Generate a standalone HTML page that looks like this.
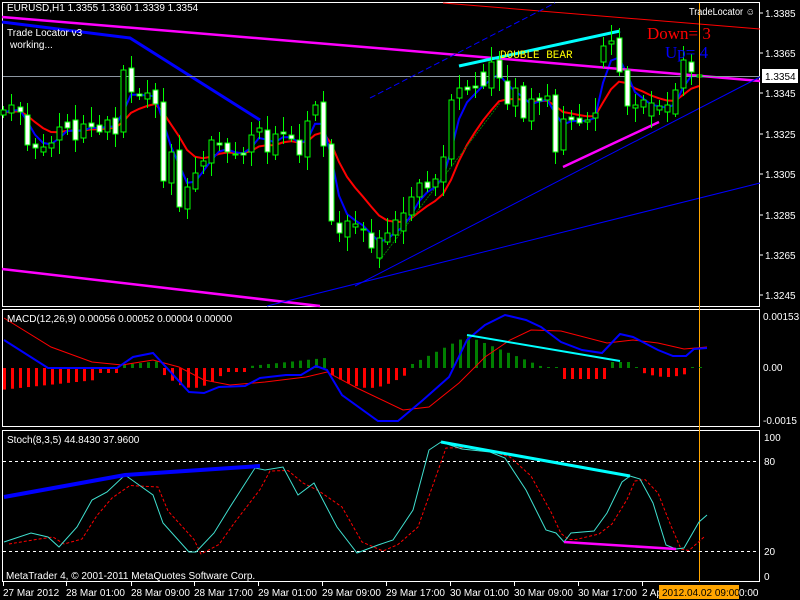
<!DOCTYPE html>
<html><head><meta charset="utf-8"><style>
html,body{margin:0;padding:0;background:#000;width:800px;height:600px;overflow:hidden}
svg{display:block}
text{font-family:"Liberation Sans",sans-serif;font-size:10px;fill:#fff}
</style></head><body>
<svg id="s" width="800" height="600" viewBox="0 0 800 600" xmlns="http://www.w3.org/2000/svg">
<rect width="800" height="600" fill="#000"/>
<g id="main"></g>
<rect x="2.5" y="2.5" width="757" height="304" fill="none" stroke="#fff"/>
<rect x="2.5" y="309.5" width="757" height="117" fill="none" stroke="#fff"/>
<rect x="2.5" y="430.5" width="757" height="151" fill="none" stroke="#fff"/>
<polyline points="2,17 400,50 760,81" fill="none" stroke="#ff00ff" stroke-width="2.5"/>
<polyline points="2,22 130,38 260,120" fill="none" stroke="#0000ff" stroke-width="3"/>
<line x1="2" y1="269" x2="320" y2="306" stroke="#ff00ff" stroke-width="2.5"/>
<line x1="3" y1="76.5" x2="760" y2="76.5" stroke="#8c96a0" stroke-width="1"/>
<line x1="443" y1="3" x2="760" y2="29" stroke="#ff0000" stroke-width="1"/>
<line x1="370" y1="98" x2="555" y2="3" stroke="#0000ff" stroke-width="1" stroke-dasharray="6,3"/>
<line x1="355" y1="286" x2="760" y2="77" stroke="#0000ff" stroke-width="1"/>
<line x1="267" y1="306" x2="760" y2="183" stroke="#0000ff" stroke-width="1"/>
<line x1="380" y1="260" x2="500" y2="103" stroke="#008000" stroke-width="1" stroke-dasharray="2,1"/>
<line x1="459" y1="66" x2="620" y2="31" stroke="#00ffff" stroke-width="3"/>
<line x1="563" y1="167" x2="659" y2="122" stroke="#ff00ff" stroke-width="2.5"/>
<g id="candles"></g>
<line x1="699.5" y1="3" x2="699.5" y2="582" stroke="#ffa500" stroke-width="1"/>
<text x="7" y="11">EURUSD,H1  1.3355 1.3360 1.3339 1.3354</text>
<text x="7" y="36">Trade Locator v3</text>
<text x="10" y="48">working...</text>
<text x="500" y="58" style="font-family:'Liberation Mono',monospace;font-size:11px;fill:#ffff00">DOUBLE BEAR</text>
<text x="647" y="39" style="font-family:'Liberation Serif',serif;font-size:17px;fill:#ff0000">Down=  3</text>
<text x="665" y="58" style="font-family:'Liberation Serif',serif;font-size:17px;fill:#0000ff">Up=  4</text>
<text x="689" y="15" textLength="66" lengthAdjust="spacingAndGlyphs">TradeLocator ☺</text>
<g id="axis"></g>
<rect x="762" y="69" width="36" height="14" fill="#fff"/>
<text x="765" y="80" style="fill:#000">1.3354</text>
<g id="hist"></g>
<polyline id="macdRed" fill="none" stroke="#ff0000" stroke-width="1"/>
<polyline id="macdBlue" fill="none" stroke="#0000ff" stroke-width="2"/>
<line x1="467" y1="335" x2="620" y2="361" stroke="#00ffff" stroke-width="2"/>
<text x="7" y="322">MACD(12,26,9) 0.00056 0.00052 0.00004 0.00000</text>
<text x="763" y="320">0.00153</text>
<text x="763" y="371">0.00</text>
<text x="763" y="424">-0.0015</text>
<line x1="3" y1="461.5" x2="760" y2="461.5" stroke="#fff" stroke-dasharray="3,3"/>
<line x1="3" y1="551.5" x2="760" y2="551.5" stroke="#fff" stroke-dasharray="3,3"/>
<polyline id="stSig" fill="none" stroke="#ff0000" stroke-width="1" stroke-dasharray="3,2"/>
<polyline id="stMain" fill="none" stroke="#40e0d0" stroke-width="1"/>
<polyline points="4,497 125,475 260,466" fill="none" stroke="#0000ff" stroke-width="4"/>
<line x1="441" y1="442" x2="630" y2="476" stroke="#00ffff" stroke-width="3"/>
<line x1="564" y1="542" x2="676" y2="549" stroke="#ff00ff" stroke-width="2.5"/>
<text x="7" y="443">Stoch(8,3,5) 44.8430 37.9600</text>
<text x="764" y="441">100</text>
<text x="764" y="465">80</text>
<text x="764" y="555">20</text>
<text x="764" y="580">0</text>
<text x="6" y="579">MetaTrader 4, © 2001-2011 MetaQuotes Software Corp.</text>
<g id="time"></g>
<rect x="659" y="585" width="80" height="14" fill="#ffa500"/>
<text x="662" y="596" style="fill:#000">2012.04.02 09:00</text>
<text x="739" y="596">0:00</text>
</svg>
<script>
var NS="http://www.w3.org/2000/svg";
function el(p,t,a){var e=document.createElementNS(NS,t);for(var k in a)e.setAttribute(k,a[k]);p.appendChild(e);return e;}
var C=[[3,110,115,0],[11,105,113,0],[20,107,112,1],[27,115,145,1],[35,144,148,1],[43,147,152,0],[51,143,148,0],[59,127,140,0],[67,122,128,1],[75,120,140,1],[83,124,138,0],[91,123,127,1],[99,125,132,1],[107,120,132,0],[115,118,134,1],[123,70,132,0],[131,68,92,1],[139,94,96,1],[147,93,99,0],[155,90,104,1],[163,102,181,1],[171,152,183,0],[179,150,207,1],[187,187,209,0],[195,173,189,0],[203,161,166,0],[211,140,163,0],[219,143,145,1],[227,143,152,1],[235,154,155,1],[243,153,155,1],[251,135,152,0],[259,128,132,0],[267,130,152,1],[275,134,155,0],[283,132,134,1],[291,135,139,1],[299,140,155,1],[307,121,157,0],[315,105,115,0],[323,102,146,1],[331,144,221,1],[339,223,233,1],[347,221,237,0],[355,224,227,0],[363,229,230,1],[371,233,248,1],[379,238,258,0],[387,233,242,0],[395,220,235,0],[403,213,231,0],[411,197,215,0],[419,183,197,0],[427,182,188,1],[435,179,187,0],[443,157,182,0],[451,100,159,0],[459,88,98,0],[467,87,90,1],[475,86,88,1],[483,72,86,1],[491,62,88,0],[499,60,78,1],[507,81,104,1],[515,88,106,0],[523,86,118,1],[531,99,121,0],[539,98,101,1],[547,96,100,0],[555,95,152,1],[563,119,150,0],[571,117,120,1],[579,118,123,1],[587,120,122,0],[595,113,118,0],[603,46,62,0],[611,41,44,0],[619,38,72,1],[627,70,106,1],[635,105,108,0],[643,100,107,0],[651,103,116,0],[659,106,110,0],[667,105,112,0],[675,90,114,0],[683,60,88,0],[691,62,72,1],[699,75,77,0]];
var g=document.getElementById('main'),cg=document.getElementById('candles');
var b=[],r=[],eb=null,er=null;
C.forEach(function(c,i){var m=(c[1]+c[2])/2;eb=eb==null?m:eb+0.55*(m-eb);er=er==null?m:er+0.22*(m-er);b.push(c[0]+','+eb.toFixed(1));r.push(c[0]+','+er.toFixed(1));});
el(g,'polyline',{points:r.join(' '),fill:'none',stroke:'#ff0000','stroke-width':2});
el(g,'polyline',{points:b.join(' '),fill:'none',stroke:'#0000ff','stroke-width':2});
C.forEach(function(c,i){var hi=c[1]-(4+(i*7)%13),lo=c[2]+(3+(i*5)%12);
el(cg,'line',{x1:c[0]+.5,y1:hi,x2:c[0]+.5,y2:lo,stroke:'#00ff00','stroke-width':1});
el(cg,'rect',{x:c[0]-2,y:c[1],width:5,height:Math.max(1,c[2]-c[1]),fill:c[3]?'#fff':'#000',stroke:'#00ff00','stroke-width':1});});
var ax=document.getElementById('axis');
[['1.3385',17],['1.3365',57],['1.3345',97],['1.3325',138],['1.3305',178],['1.3285',219],['1.3265',259],['1.3245',299]].forEach(function(p){
var t=el(ax,'text',{x:765,y:p[1]});t.textContent=p[0];el(ax,'line',{x1:760,y1:p[1]-4,x2:763,y2:p[1]-4,stroke:'#fff'});});
var hg=document.getElementById('hist');
function hv(x){
if(x<95)return -22+ (x/95)*10;
if(x<118)return -5;
if(x<160)return 3+ (x-120)/40*4;
if(x<245){var t=(x-160)/85;return -(4+16*Math.sin(Math.PI*Math.min(1,t*1.3)));}
if(x<330)return 2+ (x-250)/65*7;
if(x<407)return -(6+14*Math.sin(Math.PI*(x-330)/77));
if(x<545){if(x<467)return 3+(x-410)/57*29;return 32-(x-467)/78*32;}
if(x<557)return 0.5;
if(x<607)return -11;
if(x<632)return 6;
if(x<640)return 0.5;
if(x<692)return -(4+5*Math.sin(Math.PI*(x-640)/52));
return 0.5;}
for(var x=4;x<=700;x+=8){var v=hv(x);var h=Math.abs(v);if(h<1)h=1;
el(hg,'rect',{x:x-1,y:v>0?368-h:368,width:3,height:h,fill:v>0?'#008000':'#ff0000'});}
document.getElementById('macdBlue').setAttribute('points','4,340 48,368 117,368 133,357 153,353 189,392 204,393 219,387 245,386 260,378 286,375 301,375 316,366 327,370 342,395 378,421 398,421 423,400 449,377 467,340 485,325 505,315 526,320 541,327 561,342 582,350 602,353 620,334 633,337 658,350 673,356 686,356 694,349 707,348');
document.getElementById('macdRed').setAttribute('points','4,318 51,347 92,362 122,365 153,360 179,367 204,380 230,385 265,382 306,377 327,372 357,388 403,410 429,407 459,383 485,357 510,340 531,330 561,331 607,343 633,340 658,343 684,349 707,347');
var sm=[[4,542],[31,533],[48,537],[59,547],[77,527],[92,500],[107,492],[125,475],[153,495],[163,523],[189,552],[196,552],[214,533],[230,507],[255,468],[265,470],[283,467],[298,495],[314,483],[337,527],[357,553],[378,545],[393,540],[413,510],[429,450],[441,442],[462,449],[490,452],[505,458],[526,490],[546,530],[556,533],[564,542],[571,533],[594,531],[607,513],[622,482],[630,476],[640,479],[653,503],[666,545],[676,549],[684,548],[699,522],[707,515]];
document.getElementById('stMain').setAttribute('points',sm.map(function(p){return p.join(',')}).join(' '));
var sig=sm.map(function(p,i){var q=sm[Math.max(0,i-1)];return (p[0]+5)+','+((p[1]+q[1])/2+2)}).slice(0,-1);
document.getElementById('stSig').setAttribute('points',sig.join(' '));
var tg=document.getElementById('time');
[['27 Mar 2012',3],['28 Mar 01:00',66],['28 Mar 09:00',131],['28 Mar 17:00',194],['29 Mar 01:00',258],['29 Mar 09:00',322],['29 Mar 17:00',386],['30 Mar 01:00',450],['30 Mar 09:00',514],['30 Mar 17:00',578],['2 Ap',642]].forEach(function(p){
var t=el(tg,'text',{x:p[1],y:596});t.textContent=p[0];el(tg,'line',{x1:p[1]+.5,y1:582,x2:p[1]+.5,y2:586,stroke:'#fff'});});
</script>
</body></html>
